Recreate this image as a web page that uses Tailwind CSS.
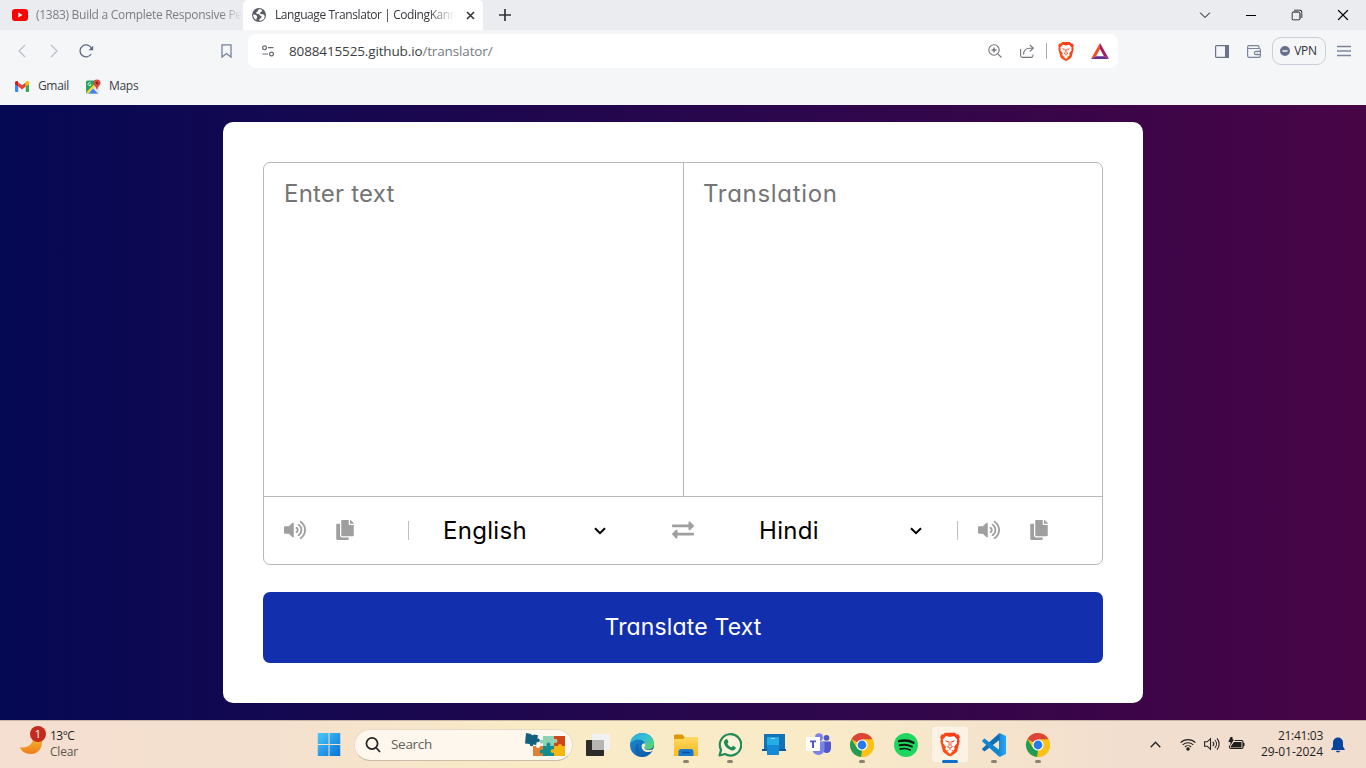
<!DOCTYPE html>
<html lang="en">
<head>
<meta charset="utf-8">
<title>Language Translator | CodingKannada</title>
<script src="https://cdn.jsdelivr.net/npm/@tailwindcss/browser@4"></script>
</head>
<body class="w-[1366px] h-[768px] overflow-hidden flex flex-col font-['Open_Sans',sans-serif] text-[12px] text-[#3b3e45]">
<svg width="0" height="0" class="absolute">
  <defs>
    <linearGradient id="flame" x1="0" y1="1" x2="1" y2="0"><stop offset="0" stop-color="#ff5a14"/><stop offset="1" stop-color="#f8371a"/></linearGradient>
    <linearGradient id="win" x1="0" y1="0" x2="1" y2="1"><stop offset="0" stop-color="#4cc8fb"/><stop offset="1" stop-color="#0672d6"/></linearGradient>
    <linearGradient id="folder" x1="0" y1="0" x2="0" y2="1"><stop offset="0" stop-color="#ffd862"/><stop offset="1" stop-color="#fbb91c"/></linearGradient>
    <linearGradient id="moon" x1="0" y1="0" x2="0" y2="1"><stop offset="0" stop-color="#f5b72c"/><stop offset="1" stop-color="#ef7c1c"/></linearGradient>
    <linearGradient id="edgeTop" x1="0" y1="0" x2="1" y2="1"><stop offset="0" stop-color="#2aa8e0"/><stop offset=".5" stop-color="#35c2cf"/><stop offset="1" stop-color="#67d848"/></linearGradient>
    <linearGradient id="edgeLow" x1="0" y1="0" x2="1" y2="1"><stop offset="0" stop-color="#1b94dc"/><stop offset="1" stop-color="#0d4f9e"/></linearGradient>
    <linearGradient id="code" x1="0" y1="0" x2="1" y2="0"><stop offset="0" stop-color="#1389d6"/><stop offset="1" stop-color="#2ba7f5"/></linearGradient>
    <symbol id="volume" viewBox="0 0 576 512"><path d="M215.03 71.05L126.06 160H24c-13.26 0-24 10.74-24 24v144c0 13.25 10.74 24 24 24h102.06l88.97 88.95c15.03 15.03 40.97 4.47 40.97-16.97V88.02c0-21.46-25.96-31.98-40.97-16.97zm233.32-51.08c-11.17-7.33-26.18-4.24-33.51 6.95-7.34 11.17-4.22 26.18 6.95 33.51 66.27 43.49 105.82 116.6 105.82 195.58 0 78.98-39.55 152.09-105.82 195.58-11.17 7.32-14.29 22.34-6.95 33.5 7.04 10.71 21.93 14.56 33.51 6.95C528.27 439.58 576 351.33 576 256S528.27 72.43 448.35 19.97zM480 256c0-63.53-32.06-121.94-85.77-156.24-11.19-7.14-26.03-3.82-33.12 7.46s-3.78 26.21 7.41 33.36C408.27 165.97 432 209.11 432 256s-23.73 90.04-63.48 115.42c-11.19 7.14-14.5 22.07-7.41 33.36 6.51 10.36 21.12 15.14 33.12 7.46C447.94 377.94 480 319.54 480 256zm-141.77-76.87c-11.58-6.33-26.19-2.16-32.61 9.45-6.39 11.61-2.16 26.2 9.45 32.61C327.98 228.28 336 241.63 336 256c0 14.38-8.02 27.72-20.92 34.81-11.61 6.41-15.84 21-9.45 32.61 6.43 11.66 21.05 15.8 32.61 9.45 28.23-15.55 45.77-45 45.77-76.88s-17.54-61.32-45.78-76.86z"/></symbol>
    <symbol id="copy" viewBox="0 0 448 512"><path d="M320 448v40c0 13.255-10.745 24-24 24H24c-13.255 0-24-10.745-24-24V120c0-13.255 10.745-24 24-24h72v296c0 30.879 25.121 56 56 56h168zm0-344V0H152c-13.255 0-24 10.745-24 24v368c0 13.255 10.745 24 24 24h272c13.255 0 24-10.745 24-24V128H344c-13.2 0-24-10.8-24-24zm120.971-31.029L375.029 7.029A24 24 0 0 0 358.059 0H352v96h96v-6.059a24 24 0 0 0-7.029-16.97z"/></symbol>
    <symbol id="swap" viewBox="0 0 512 512"><path d="M0 168v-16c0-13.255 10.745-24 24-24h360V80c0-21.367 25.899-32.042 40.971-16.971l80 80c9.372 9.373 9.372 24.569 0 33.941l-80 80C409.956 271.982 384 261.456 384 240v-48H24c-13.255 0-24-10.745-24-24zm488 152H128v-48c0-21.314-25.862-32.08-40.971-16.971l-80 80c-9.372 9.373-9.372 24.569 0 33.941l80 80C102.057 463.997 128 453.437 128 432v-48h360c13.255 0 24-10.745 24-24v-16c0-13.255-10.745-24-24-24z"/></symbol>
    <symbol id="lion" viewBox="0 0 20 24">
      <path d="M5.200 0h9.600l1.800 2 1.600-.2 1.700 2.700-.8 2.300.6 2-2.600 10c-.5 1.300-4.800 4.400-7.100 5.200-2.300-.8-6.600-3.900-7.100-5.200L.3 8.800l.6-2L.1 4.500l1.700-2.700 1.600.2z" fill="url(#flame)"/>
      <path d="M6 3.600l4 .8 4-.8 3.300 3.700-.6 1.600.4 1.500-3 3.900.5 2-.9 1.600-1.700-.3L10 18.900l-2-1.300-1.700.3-.9-1.600.5-2-3-3.900.4-1.500-.6-1.600z" fill="#fff"/>
      <path d="M7 18.500l3-1 3 1-3 3z" fill="#fff"/>
      <path d="M4.800 7.800l4 .9-1.600 1.400zM15.200 7.800l-4 .9 1.600 1.400z" fill="#f5421a"/>
      <path d="M8.900 8.700l.3 4.300-1.700 1.200L10 15.600l2.500-1.400-1.700-1.200.3-4.300M10 15.600v1.800" fill="none" stroke="#f5421a" stroke-width=".9"/>
    </symbol>
    <symbol id="chrome" viewBox="0 0 24 24">
      <circle cx="12" cy="12" r="12" fill="#fbc116"/>
      <path d="M12 12 1.610 6A12 12 0 0 1 22.400 6.050z" fill="#dc4437"/>
      <path d="M1.610 6 7 15.200 12 17.500 11 24A12 12 0 0 1 1.610 6z" fill="#1f9d55"/>
      <path d="M12 6.300H22.500L22.400 6A12 12 0 0 1 11.500 24l5.300-8.800z" fill="#fbc116"/>
      <circle cx="12" cy="12" r="5.600" fill="#fff"/><circle cx="12" cy="12" r="4.400" fill="#2a79ea"/>
    </symbol>
  </defs>
</svg>

<!-- Tab strip -->
<header class="h-[30px] shrink-0 bg-[#ebecf0] flex items-stretch">
  <div class="w-[243px] pl-3 flex items-center text-[#7b7d83]">
    <svg class="shrink-0 mr-2" width="16" height="12" viewBox="0 0 16 12"><rect width="16" height="12" rx="3" fill="#f00"/><path d="M6.300 3.500v5L10.500 6z" fill="#fff"/></svg>
    <span class="whitespace-nowrap tracking-[-0.29px] mask-r-from-90%">(1383) Build a Complete Responsive Pe</span>
  </div>
  <div class="w-[240px] bg-white rounded-t-[5px] flex items-center pl-[9px] text-[#35373c]">
    <svg class="shrink-0 mr-[9px]" width="14" height="14" viewBox="0 0 14 14"><circle cx="7" cy="7" r="7" fill="#5b5e64"/><path d="M6.800 1.200c-.9 1-.4 1.800-1.300 2.300s-1.400.7-1.200 1.600c.2 1 1.600.9 2.400.9s.6 1.500 1.800 1.700 1.500.5.7 1.900-1.900 1.200-2.200 3.200c3 .2 5-1.500 5.600-3.600.3-1.700-.4-2.600-1.800-3-.9-.3-2.300.2-2.700-.8-.4-1.200 1.800-1.200 2-2.600C10.200 1.700 8.500 1.200 6.800 1.200zM1.200 6.500c1.600-.1 3.200.7 3.800 1.700.4 1-.6 1.600-.6 3.600C2.300 11 1 9 1.200 6.500z" fill="#fff"/></svg>
    <span class="w-[180px] whitespace-nowrap tracking-[-0.42px] mask-r-from-85%">Language Translator | CodingKann</span>
    <svg class="ml-[11px]" width="9" height="9" viewBox="0 0 9 9"><path d="M1 1l7 7M8 1L1 8" stroke="#37393f" stroke-width="1.700"/></svg>
  </div>
  <div class="w-11 flex items-center justify-center"><svg width="12" height="12" viewBox="0 0 12 12"><path d="M6 0v12M0 6h12" stroke="#33353b" stroke-width="1.700"/></svg></div>
  <div class="ml-auto flex text-black">
    <div class="w-[46px] grid place-items-center"><svg class="-translate-x-[0.500px] -translate-y-[0.500px]" width="11" height="11" viewBox="0 0 11 11" fill="none" stroke="currentColor"><path d="M.5 3l5 5 5-5"/></svg></div>
    <div class="w-[46px] grid place-items-center"><svg width="10" height="11" viewBox="0 0 10 11"><path d="M0 5.500h10" stroke="currentColor"/></svg></div>
    <div class="w-[46px] grid place-items-center"><svg class="-translate-x-[0.500px] -translate-y-[0.500px]" width="11" height="11" viewBox="0 0 11 11" fill="none" stroke="currentColor"><rect x=".5" y="2.500" width="8" height="8" rx="1.500"/><path d="M2.500.5H8A2.500 2.500 0 0 1 10.500 3v5.500"/></svg></div>
    <div class="w-[46px] grid place-items-center"><svg class="-translate-x-[0.500px] -translate-y-[0.500px]" width="11" height="11" viewBox="0 0 11 11"><path d="M.5.5l10 10M10.500.5l-10 10" stroke="currentColor" stroke-width="1.100"/></svg></div>
  </div>
</header>

<!-- Toolbar -->
<nav class="h-[42px] shrink-0 bg-[#f5f6f8] flex items-center text-[#6b7486]">
  <svg class="ml-[18px]" width="8" height="14" viewBox="0 0 8 14" fill="none" stroke="#b9bdc7" stroke-width="1.200"><path d="M7 1L1 7l6 6"/></svg>
  <svg class="ml-6" width="8" height="14" viewBox="0 0 8 14" fill="none" stroke="#b9bdc7" stroke-width="1.200"><path d="M1 1l6 6-6 6"/></svg>
  <svg class="ml-[21px]" width="15" height="14" viewBox="0 0 15 14" fill="none"><path d="M12.200 10A6 6 0 1 1 12.600 4.500" stroke="#5f6b80" stroke-width="1.300"/><path d="M9.500 6.300h4.700V1.800z" fill="#5f6b80"/></svg>
  <svg class="ml-[127px]" width="11" height="14" viewBox="0 0 11 14" fill="none"><path d="M1 .8h9v12.300L5.500 9.500 1 13.100z" stroke="#77829a" stroke-width="1.300"/></svg>
  <div class="ml-[16px] w-[870px] h-[34px] bg-white rounded-lg flex items-center">
    <svg class="ml-[14px]" width="12" height="12" viewBox="0 0 12 12" fill="none" stroke="#676a70" stroke-width="1.200"><circle cx="2.500" cy="2.700" r="1.900"/><circle cx="9.500" cy="9" r="1.900"/><path d="M6 2.700h5.500M.5 9H6"/></svg>
    <span class="ml-[15px] text-[13.500px] leading-5 tracking-[-0.14px] text-[#3b3e44]">8088415525.github.io<span class="text-[#777b82]">/translator/</span></span>
    <div class="ml-auto flex items-center">
      <svg width="14" height="14" viewBox="0 0 14 14" fill="none" stroke="#73767d" stroke-width="1.100"><circle cx="6" cy="6" r="5.200"/><path d="M9.800 9.800l3.700 3.700"/><path d="M6 3.500v5M3.500 6h5" stroke-width="1.400"/></svg>
      <svg class="ml-[18px]" width="14" height="14" viewBox="0 0 14 14" fill="none" stroke="#73767d" stroke-width="1.100"><path d="M.6 5v6.500c0 1.200.8 1.900 1.900 1.900h8.600c1.100 0 1.900-.7 1.900-1.900V10.500"/><path d="M3.500 10.500c0-4 2.500-6.300 6-6.300h3.500M9.800 1l3.500 3.200-3.500 3.300"/></svg>
      <div class="ml-3 w-px h-4 bg-[#a9abb1]"></div>
      <svg class="ml-[11px]" width="16" height="19"><use href="#lion" width="16" height="19"/></svg>
      <svg class="ml-[17px] mr-[9px]" width="18" height="16" viewBox="0 0 18 16"><path d="M9 0L0 16l5-2.800L9 6z" fill="#ff4724"/><path d="M9 0l9 16-5-2.800L9 6z" fill="#9e1f63"/><path d="M0 16h18l-5-2.800H5z" fill="#662d91"/></svg>
    </div>
  </div>
  <svg class="ml-[97px]" width="14" height="13" viewBox="0 0 14 13"><rect x=".6" y=".6" width="12.800" height="11.800" rx="1" fill="none" stroke="currentColor" stroke-width="1.200"/><path d="M10 0h4v13h-4z" fill="currentColor"/></svg>
  <svg class="ml-[18px]" width="14" height="13" viewBox="0 0 14 13" fill="none" stroke="#7b859b" stroke-width="1.200"><path d="M12 3.500V2.200c0-1-.5-1.600-1.500-1.600H2C1.100.6.600 1.200.6 2.200v8.600c0 1 .5 1.600 1.500 1.600h9.800c.9 0 1.500-.6 1.500-1.600V5c0-.9-.6-1.500-1.500-1.500H.8M13.400 6.300H8.900c-1 0-1.500.5-1.500 1.600s.5 1.700 1.500 1.700h4.500M9.700 8h1"/></svg>
  <div class="ml-[11px] w-[54px] h-7 rounded-[9px] border border-[#cbced8] flex items-center justify-center gap-1 pr-px text-[#30333a]">
    <svg width="10" height="10" viewBox="0 0 10 10"><circle cx="5" cy="5" r="5" fill="#69708f"/><path d="M2.500 5h5" stroke="#fff" stroke-width="1.400"/></svg>
    <span class="text-[12px] leading-4 tracking-[-0.3px]">VPN</span>
  </div>
  <svg class="ml-[11px]" width="14" height="12" viewBox="0 0 14 12" stroke="#7b859b" stroke-width="1.300"><path d="M0 1.500h14M0 6h14M0 10.500h14"/></svg>
</nav>

<!-- Bookmarks -->
<div class="h-[33px] shrink-0 bg-[#f5f6f8] flex items-center pb-[5px] pl-[15px]">
  <svg width="14" height="11" viewBox="0 0 14 11"><path d="M0 1.500V10a1 1 0 0 0 1 1h2.200V4z" fill="#4285f4"/><path d="M14 1.500V10a1 1 0 0 1-1 1h-2.200V4z" fill="#34a853"/><path d="M3.200 1.400L7 4.300l3.800-2.900v4.100L7 8.400 3.200 5.500z" fill="#ea4335"/><path d="M0 1.700C0 .2 1.700-.4 2.800.5l.4.4v4.600L0 3.200z" fill="#c5221f"/><path d="M14 1.700c0-1.500-1.700-2.100-2.800-1.200l-.4.400v4.600L14 3.200z" fill="#fbbc04"/></svg>
  <span class="ml-[9px] w-[31px] tracking-[-0.35px]">Gmail</span>
  <svg class="ml-[17px]" width="15" height="15" viewBox="0 0 15 15"><rect y="1.500" width="13" height="13" rx="1.500" fill="#27a35b"/><path d="M0 14.500L10.500 4l2.500 2v8.500z" fill="#e5e7e9"/><path d="M2.500 14.500L7 9.500l5 5z" fill="#3f80ee"/><path d="M.5 13L9.500 4l1.500 1.500-9 9z" fill="#fdd13a"/><path d="M4.800 4.300a1.500 1.500 0 1 0 .2 1.400H3.800" stroke="#fff" stroke-width=".8" fill="none"/><path d="M11 .5a3.500 3.500 0 0 1 3.500 3.500c0 2.500-2.600 3.500-3.200 6.500h-.6C10.100 7.500 7.500 6.500 7.500 4A3.500 3.500 0 0 1 11 .5z" fill="#dc4a3d"/><circle cx="11" cy="4" r="1.200" fill="#7d2320"/></svg>
  <span class="ml-[8px] tracking-[-0.3px]">Maps</span>
</div>

<!-- Page -->
<main class="h-[615px] shrink-0 bg-[linear-gradient(to_right,#050853,#480546)] pt-[17px] flex justify-center items-start font-[Inter,sans-serif] [font-feature-settings:'cv11'] text-[24px]">
  <section class="w-[920px] h-[581px] bg-white rounded-[10px] p-10">
    <div class="h-[403px] border border-[#b8b8b8] rounded-[7px] flex flex-col">
      <div class="h-[333px] flex text-[#757575]">
        <div class="w-[420px] border-r border-[#b8b8b8] pl-5 pt-[15px] leading-8 tracking-[0.2px]">Enter text</div>
        <div class="flex-1 pl-[19px] pt-[15px] leading-8 tracking-[0.7px]">Translation</div>
      </div>
      <div class="flex-1 border-t border-[#b8b8b8] flex items-center text-[#9f9f9f]">
        <svg class="ml-5 fill-current -translate-y-px" width="22" height="20"><use href="#volume" width="22" height="20"/></svg>
        <svg class="ml-[30px] fill-current -translate-y-px" width="18" height="20"><use href="#copy" width="18" height="20"/></svg>
        <div class="ml-[54px] w-px h-[19px] bg-[#bfbfbf]"></div>
        <span class="ml-[34px] w-[151px] text-black tracking-[0.300px]">English</span>
        <svg width="12" height="8" viewBox="0 0 12 8" fill="none" stroke="#000" stroke-width="2"><path d="M1 1.200l5 5 5-5"/></svg>
        <svg class="ml-[66px] fill-current -translate-y-px" width="22" height="22"><use href="#swap" width="22" height="22"/></svg>
        <span class="ml-[65px] w-[151px] text-black tracking-[0.300px]">Hindi</span>
        <svg width="12" height="8" viewBox="0 0 12 8" fill="none" stroke="#000" stroke-width="2"><path d="M1 1.200l5 5 5-5"/></svg>
        <div class="ml-[35px] w-px h-[19px] bg-[#bfbfbf]"></div>
        <svg class="ml-5 fill-current -translate-y-px" width="22" height="20"><use href="#volume" width="22" height="20"/></svg>
        <svg class="ml-[30px] fill-current -translate-y-px" width="18" height="20"><use href="#copy" width="18" height="20"/></svg>
      </div>
    </div>
    <button class="mt-[27px] w-full h-[71px] rounded-[7px] bg-[#122fae] text-white text-[23px] tracking-[0.15px]">Translate Text</button>
  </section>
</main>

<!-- Taskbar -->
<footer class="h-12 shrink-0 border-t border-[#c9b5a8] bg-[linear-gradient(to_right,#f4dfd0,#f4e0cf_20%,#f9ebc6_38%,#f9ebc8_60%,#f2decf_82%,#f2decf)] flex items-center text-[#1f1f1f]">
  <div class="w-[307px] pl-5 flex items-center">
    <div class="relative w-[26px] h-8">
      <svg class="absolute left-0 top-[8px]" width="23" height="18" viewBox="0 0 23 18"><path d="M0 10C6 12 13 8 13 1l9 1c1 8-3 15-11 15C5 17 1 14 0 10z" fill="url(#moon)"/></svg>
      <span class="absolute left-[10px] -top-[3px] size-4 rounded-full bg-[#c42b1c] text-white text-[11px] leading-4 text-center">1</span>
    </div>
    <div class="ml-1 pb-px leading-4 tracking-[-0.5px]"><div>13°C</div><div class="text-[#5d564f] tracking-[-0.2px]">Clear</div></div>
  </div>
  <div class="w-11 grid place-items-center"><svg class="-translate-x-[0.500px]" width="23" height="23" viewBox="0 0 23 23"><path d="M0 0h11v11H0zM12 0h11v11H12zM0 12h11v11H0zM12 12h11v11H12z" fill="url(#win)"/></svg></div>
  <div class="ml-[3px] w-[219px] h-8 rounded-full bg-[#fdf7ee] border border-[#e9dac5] border-b-[#cbbda9] flex items-center pl-[10px]">
    <svg width="16" height="16" viewBox="0 0 16 16" fill="none" stroke="#222" stroke-width="1.700"><circle cx="7" cy="6.500" r="5.600"/><path d="M11 10.500l4 4.500"/></svg>
    <span class="ml-[10px] text-[13.500px] text-[#625d57] tracking-[-0.3px]">Search</span>
    <svg class="ml-auto mr-[6px]" width="42" height="24" viewBox="0 0 42 24">
      <path d="M2 0l5 1a2 2 0 0 0 3 .6l4 .6-.6 3.500a1.800 1.800 0 1 1-.6 3l-.6 3.200-3-.4a1.700 1.700 0 1 1-3.300-.5L1 10.500 2 0z" fill="#14607f"/>
      <path d="M19 3h11v4a2 2 0 1 1 0 3v3H19v-3a2 2 0 1 1 0-3z" fill="#8dd2b5"/>
      <path d="M30 3h11v10H30V9.500a2 2 0 1 0 0-3z" fill="#cf4619"/>
      <path d="M9 13h3a2 2 0 1 0 4 0h3v10H9z" fill="#df8136"/>
      <path d="M19 13h4a2 2 0 1 1 3 0h4v10H19v-3a2 2 0 1 1 0-3z" fill="#138e8f"/>
      <path d="M30 13h4a2 2 0 1 1 4 0h3v10H30v-3.500a2 2 0 1 1 0-3z" fill="#f5b70f"/>
    </svg>
  </div>
  <div class="ml-[3px] flex h-full">
    <div class="w-11 grid place-items-center"><svg width="24" height="22" viewBox="0 0 24 22"><rect x="6" width="18" height="16" rx="1" fill="#f0f1f2"/><rect y="6" width="18" height="16" rx="1" fill="#2b2b2a"/><path d="M6 6h12v10H6z" fill="#b6b5b2"/></svg></div>
    <div class="w-11 grid place-items-center"><svg width="24" height="24" viewBox="0 0 24 24"><circle cx="12" cy="12" r="12" fill="url(#edgeLow)"/><path d="M.1 11C1 4.500 6 0 12.500 0 19 0 24 4.700 24 10.500c0 4-3 6-6 6-2.700 0-4.500-1-4-2.500.3-.8 1-1.300 1-2.600 0-2.700-2.600-5-6.300-5C4.500 6.400 1.500 8 .1 11z" fill="url(#edgeTop)"/><path d="M8.700 10c-2.500 5 1 11.500 7.300 12.700L12 24C5 23 3 13 8.700 10z" fill="#1263ad"/><path d="M14.600 10.200c-1.700 0-3 1.300-3 3 0 3.500 3 5.800 6.500 5.800 1.800 0 3.300-.5 4.700-1.300l.6.500c.3-.5 1.100-2.200 1.100-3.200-1.500 1.500-3.500 2-5.500 2-3 0-5-1-4.600-2.800.6-.9 1-1.500.9-2.700z" fill="#f8eac8"/></svg></div>
    <div class="w-11 grid place-items-center relative"><svg width="24" height="22" viewBox="0 0 24 22"><path d="M0 1.500A1 1 0 0 1 1 .5h7.500l2 2.500H23a1 1 0 0 1 1 1v2H0z" fill="#d99a0b"/><path d="M0 5h9l2-2h13v18a1 1 0 0 1-1 1H1a1 1 0 0 1-1-1z" fill="url(#folder)"/><path d="M4.500 22v-4.500c0-1.500 1-2.500 2.500-2.500h10c1.500 0 2.500 1 2.500 2.500V22z" fill="#1779ce"/><path d="M8 18.500h8" stroke="#0a4e98" stroke-width="1.500"/></svg><i class="absolute bottom-[5px] left-[19px] w-[6px] h-[3px] rounded-full bg-[#8b8272]"></i></div>
    <div class="w-11 grid place-items-center relative"><svg width="24" height="24" viewBox="0 0 24 24"><path d="M1.500 22.500l1.600-5.600A10.700 10.700 0 1 1 7 21z" fill="#fbf1d9" stroke="#1f8b57" stroke-width="2.200" stroke-linejoin="round"/><path d="M8 6.200c.8-.3 1.300.1 1.600.9l.7 1.700c.2.700-.3 1.200-.9 1.900 1 1.800 2.300 2.900 4 3.600.8-.7 1.100-1.600 1.900-1.300l2 1c.7.400.5 1.300.1 2-.8 1.300-2.600 1.700-4.200 1.200-3.700-1.200-6.300-4.100-7.200-7C5.600 8.500 6.500 6.800 8 6.200z" fill="#1f8b57"/></svg><i class="absolute bottom-[5px] left-[19px] w-[6px] h-[3px] rounded-full bg-[#8b8272]"></i></div>
    <div class="w-11 grid place-items-center"><svg width="24" height="22" viewBox="0 0 24 22"><path d="M2 0h21v16H2z" fill="#1272b8"/><path d="M0 15h24v2H0z" fill="#0c5b9b"/><path d="M6 15h5v6H5z" fill="#0e579d"/><rect x="5" y="3" width="12" height="18" rx="1" fill="#24aee9"/><path d="M5 11h12v9a1 1 0 0 1-1 1H6a1 1 0 0 1-1-1z" fill="#1589d5"/><path d="M9 4.500h4" stroke="#98e1ff"/></svg></div>
    <div class="w-11 grid place-items-center"><svg width="25" height="23" viewBox="0 0 25 23"><circle cx="13" cy="4.200" r="4" fill="#7b83eb"/><circle cx="20.500" cy="4.800" r="2.900" fill="#5059c9"/><path d="M17 8.500h7a1 1 0 0 1 1 1V15c0 3-2 5-4.500 5S17 18 17 15z" fill="#5059c9"/><path d="M7 8.500h11.500V16a6.200 6.200 0 0 1-11.500 3z" fill="#7b83eb"/><rect y="4" width="14" height="14" rx="1" fill="#fff"/><path d="M4 7.500h6v1.800H8v5.700H6V9.300H4z" fill="#5057c1"/></svg></div>
    <div class="w-11 grid place-items-center relative"><svg width="24" height="24"><use href="#chrome" width="24" height="24"/></svg><i class="absolute bottom-[5px] left-[19px] w-[6px] h-[3px] rounded-full bg-[#8b8272]"></i></div>
    <div class="w-11 grid place-items-center"><svg width="24" height="24" viewBox="0 0 24 24"><circle cx="12" cy="12" r="12" fill="#1ed760"/><g fill="none" stroke="#0c160e" stroke-linecap="round"><path d="M5 8.200c5-1.300 10.300-.8 14.500 1.500" stroke-width="2.400"/><path d="M5.600 12.300c4.300-1.200 8.600-.7 12.300 1.300" stroke-width="2"/><path d="M6.200 16c3.600-.9 7-.6 10 1.100" stroke-width="1.700"/></g></svg></div>
    <div class="w-11 grid place-items-center relative"><div class="w-[38px] h-[38px] -translate-y-[0.500px] rounded bg-[#fbf2e3] border border-[#f1e4cf] grid place-items-center"><svg width="20" height="24"><use href="#lion" width="20" height="24"/></svg></div><i class="absolute bottom-[5px] left-[14px] w-4 h-[3px] rounded-full bg-[#0b70ca]"></i></div>
    <div class="w-11 grid place-items-center relative"><svg width="24" height="24" viewBox="0 0 24 24"><path d="M17.500 0L24 3v18l-6.500 3-.5-6V6z" fill="url(#code)"/><path d="M17.500 0L18 6.500 2.500 18.500.3 16.800V15.500z" fill="#0b70b8"/><path d="M17.500 24L18 17.500 2.500 5.500.3 7.200v1.300z" fill="#1285cf"/></svg><i class="absolute bottom-[5px] left-[19px] w-[6px] h-[3px] rounded-full bg-[#8b8272]"></i></div>
    <div class="w-11 grid place-items-center relative"><svg width="24" height="24"><use href="#chrome" width="24" height="24"/></svg><i class="absolute bottom-[5px] left-[19px] w-[6px] h-[3px] rounded-full bg-[#8b8272]"></i></div>
  </div>
  <div class="ml-auto flex items-center">
    <svg width="11" height="7" viewBox="0 0 11 7" fill="none" stroke="#222" stroke-width="1.300"><path d="M.7 6.200l4.800-5 4.800 5"/></svg>
    <svg class="ml-[19px]" width="16" height="13" viewBox="0 0 16 13" fill="none" stroke="#222" stroke-width="1.100"><path d="M.6 4.700a10.500 10.500 0 0 1 14.800 0M2.700 6.900a7.500 7.500 0 0 1 10.600 0M4.900 9a4.400 4.400 0 0 1 6.200 0"/><circle cx="8" cy="11" r="1.200" fill="#222"/></svg>
    <svg class="ml-2 -translate-y-px" width="16" height="14" viewBox="0 0 16 14" fill="none" stroke="#222" stroke-width="1.100"><path d="M.6 4.800h2.600L6.500 1.700v10.600L3.200 9.200H.6z"/><path d="M8.800 4.800a3.200 3.200 0 0 1 0 4.400M10.900 3a6 6 0 0 1 0 8M13 1.300a8.700 8.700 0 0 1 0 11.400"/></svg>
    <svg class="ml-2 -translate-y-px" width="17" height="14" viewBox="0 0 17 14"><path d="M6.500 3.500h7A1.500 1.500 0 0 1 15 5v5a1.500 1.500 0 0 1-1.500 1.500H3A1.500 1.500 0 0 1 1.500 10V8.500" fill="none" stroke="#1d1d1d" stroke-width="1.200"/><path d="M6 5h7.500v5.500H3V9z" fill="#1d1d1d"/><path d="M15 6h1.500v3H15zM2.500 0h2v2.500H6L2 9 2.600 5H.3z" fill="#1d1d1d"/></svg>
    <div class="ml-[15px] w-[63px] pb-px text-right leading-4 text-[12px]"><div class="tracking-[-0.3px]">21:41:03</div><div class="tracking-[-0.05px] whitespace-nowrap">29-01-2024</div></div>
    <svg class="ml-[8px] mr-[21px]" width="14" height="16" viewBox="0 0 14 16"><path d="M7 .5a5 5 0 0 1 5 5v4l1.600 2.500c.3.600 0 1-.6 1H1c-.6 0-.9-.4-.6-1L2 9.500v-4a5 5 0 0 1 5-5zM4.800 13.800h4.400a2.300 2.300 0 0 1-4.400 0z" fill="#05439c"/></svg>
  </div>
</footer>
</body>
</html>
